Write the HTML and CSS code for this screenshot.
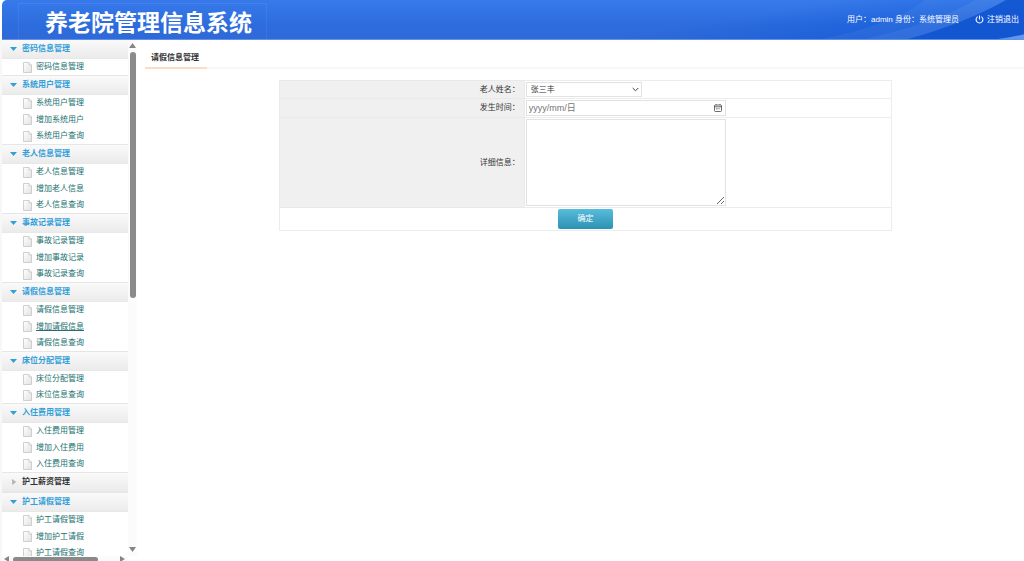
FILE: index.html
```html
<!DOCTYPE html>
<html lang="zh-CN">
<head>
<meta charset="utf-8">
<title>养老院管理信息系统</title>
<link rel="stylesheet" href="styles.css">
</head>
<body>
<svg class="sprites" aria-hidden="true">
  <defs>
    <linearGradient id="paper" x1="0" y1="0" x2="1" y2="1"><stop offset="0" stop-color="#fff"/><stop offset="1" stop-color="#e2e2e2"/></linearGradient>
    <symbol id="page" viewBox="0 0 9 11"><path d="M.5.5h5.500l2.500 2.500v7.500h-8z" fill="url(#paper)" stroke="#c4c4c4" stroke-width=".8"/><path d="M6 .5v2.500h2.500" fill="#fff" stroke="#bcbcbc" stroke-width=".7"/></symbol>
  </defs>
</svg>
<header class="topbar">
  <svg class="swoosh" viewBox="0 0 324 40" preserveAspectRatio="none" aria-hidden="true">
    <path d="M120 40Q190 27 225 0H324V40z" fill="#fff" opacity=".05"/>
    <path d="M165 40Q235 24 275 0H324V40z" fill="#fff" opacity=".06"/>
    <path d="M208 40Q265 24 306 0H324V40z" fill="#0b50d0" opacity=".8"/>
    <path d="M298 40Q312 38 324 35V40z" fill="#79a5f2" opacity=".8"/>
  </svg>
  <div class="brand"><h1 class="brand-name">养老院管理信息系统</h1></div>
  <div class="account">
    <span>用户：admin 身份：系统管理员</span>
    <a class="logout" href="#"><svg class="power" viewBox="0 0 10 10" aria-hidden="true"><path d="M3 1.800A3.800 3.800 0 1 0 7 1.800M5 .5v4.500" fill="none" stroke="#fff" stroke-width="1.200"/></svg>注销退出</a>
  </div>
</header>
<div class="workspace">
  <aside class="sidebar">
    <nav class="menu">
      <section><h2 class="group open">密码信息管理</h2><ul class="items">
        <li><svg class="page"><use href="#page"/></svg><a href="#">密码信息管理</a></li></ul></section>
      <section><h2 class="group open">系统用户管理</h2><ul class="items">
        <li><svg class="page"><use href="#page"/></svg><a href="#">系统用户管理</a></li>
        <li><svg class="page"><use href="#page"/></svg><a href="#">增加系统用户</a></li>
        <li><svg class="page"><use href="#page"/></svg><a href="#">系统用户查询</a></li></ul></section>
      <section><h2 class="group open">老人信息管理</h2><ul class="items">
        <li><svg class="page"><use href="#page"/></svg><a href="#">老人信息管理</a></li>
        <li><svg class="page"><use href="#page"/></svg><a href="#">增加老人信息</a></li>
        <li><svg class="page"><use href="#page"/></svg><a href="#">老人信息查询</a></li></ul></section>
      <section><h2 class="group open">事故记录管理</h2><ul class="items">
        <li><svg class="page"><use href="#page"/></svg><a href="#">事故记录管理</a></li>
        <li><svg class="page"><use href="#page"/></svg><a href="#">增加事故记录</a></li>
        <li><svg class="page"><use href="#page"/></svg><a href="#">事故记录查询</a></li></ul></section>
      <section><h2 class="group open">请假信息管理</h2><ul class="items">
        <li><svg class="page"><use href="#page"/></svg><a href="#">请假信息管理</a></li>
        <li><svg class="page"><use href="#page"/></svg><a class="current" href="#">增加请假信息</a></li>
        <li><svg class="page"><use href="#page"/></svg><a href="#">请假信息查询</a></li></ul></section>
      <section><h2 class="group open">床位分配管理</h2><ul class="items">
        <li><svg class="page"><use href="#page"/></svg><a href="#">床位分配管理</a></li>
        <li><svg class="page"><use href="#page"/></svg><a href="#">床位信息查询</a></li></ul></section>
      <section><h2 class="group open">入住费用管理</h2><ul class="items">
        <li><svg class="page"><use href="#page"/></svg><a href="#">入住费用管理</a></li>
        <li><svg class="page"><use href="#page"/></svg><a href="#">增加入住费用</a></li>
        <li><svg class="page"><use href="#page"/></svg><a href="#">入住费用查询</a></li></ul></section>
      <section><h2 class="group">护工薪资管理</h2></section>
      <section><h2 class="group open">护工请假管理</h2><ul class="items">
        <li><svg class="page"><use href="#page"/></svg><a href="#">护工请假管理</a></li>
        <li><svg class="page"><use href="#page"/></svg><a href="#">增加护工请假</a></li>
        <li><svg class="page"><use href="#page"/></svg><a href="#">护工请假查询</a></li></ul></section>
    </nav>
    <div class="scroll-y" aria-hidden="true">
      <svg class="arrow-y" viewBox="0 0 7 5"><path d="M3.500 0L7 5H0z"/></svg>
      <div class="track-y"><div class="thumb-y"></div></div>
      <svg class="arrow-y" viewBox="0 0 7 5"><path d="M0 0H7L3.500 5z"/></svg>
    </div>
    <div class="scroll-x" aria-hidden="true">
      <svg class="arrow-x" viewBox="0 0 5 6"><path d="M5 0V6L0 3z"/></svg>
      <div class="track-x"><div class="thumb-x"></div></div>
      <svg class="arrow-x" viewBox="0 0 5 6"><path d="M0 0V6L5 3z"/></svg>
    </div>
  </aside>
  <main class="content">
    <div class="tabs"><h2 class="tab">请假信息管理</h2></div>
    <form class="form-area">
      <table class="form-table">
        <tr><th><label for="elder">老人姓名：</label></th><td><select id="elder" class="field elder"><option>张三丰</option></select></td></tr>
        <tr><th><label for="date">发生时间：</label></th><td>
          <div class="field date-box"><input id="date" class="date" type="text" placeholder="yyyy/mm/日"><button class="picker" type="button" aria-label="选择日期"><svg class="calendar" viewBox="0 0 8 8" aria-hidden="true"><rect x=".5" y="1" width="7" height="6.500" rx="1" fill="none" stroke="#444" stroke-width=".8"/><path d="M.5 2.800h7M2 .2v1M6 .2v1" stroke="#444" stroke-width=".8"/><path d="M2.200 4.800h1.500M4.600 4.800h1" stroke="#444" stroke-width=".9"/></svg></button></div></td></tr>
        <tr><th><label for="detail">详细信息：</label></th><td><textarea id="detail" class="field detail"></textarea></td></tr>
        <tr><td class="actions" colspan="2"><button class="submit" type="button">确定</button></td></tr>
      </table>
    </form>
  </main>
</div>
</body>
</html>
```
FILE: styles.css
```css
* { box-sizing: border-box; }
html, body { height: 100%; }
body {
  margin: 0;
  display: flex;
  flex-direction: column;
  overflow: hidden;
  background: #fff;
  color: #333;
  font: 8px/16px "Liberation Sans", "Noto Sans CJK SC", sans-serif;
}
h1, h2, ul { margin: 0; padding: 0; }
ul { list-style: none; }
a { color: inherit; text-decoration: none; }
button, input, select, textarea { font: inherit; color: inherit; }
.sprites { position: absolute; width: 0; height: 0; }

.topbar {
  position: relative;
  flex: none;
  display: flex;
  justify-content: space-between;
  height: 40px;
  margin-left: 2px;
  padding: 0 5px 0 16px;
  border-bottom: 1px solid #5f92ea;
  border-top-left-radius: 5px;
  overflow: hidden;
  background:
    linear-gradient(170deg, transparent 40%, rgba(0, 80, 215, .5) 85%) right / 45% 100% no-repeat,
    linear-gradient(#387aeb, #2c6cdd 65%, #3069d8);
  color: #fff;
}
.swoosh { position: absolute; right: 0; top: 0; width: 324px; height: 100%; }
.brand {
  width: 249px;
  margin-top: 3px;
  padding-left: 26px;
  border: 1px solid rgba(255, 255, 255, .07);
  border-bottom: 0;
}
.brand-name { font-size: 23px; line-height: 39px; font-weight: 700; white-space: nowrap; }
.account { position: relative; display: flex; gap: 16px; line-height: 39px; }
.logout { display: flex; align-items: center; gap: 3px; }
.power { width: 9px; height: 9px; }

.workspace { flex: 1; min-height: 0; display: flex; }
.sidebar {
  flex: none;
  width: 137px;
  padding-left: 2px;
  display: grid;
  grid-template-columns: 1fr 9px;
  grid-template-rows: minmax(0, 1fr) 5px;
  background: linear-gradient(90deg, #f7f7f7 2px, #fff 2px);
}
.menu { overflow: hidden; }
.group {
  display: flex;
  align-items: center;
  height: 20px;
  padding-left: 8px;
  gap: 5px;
  border-top: 1px solid #e6e6e6;
  border-bottom: 1px solid #e8e8e8;
  background: linear-gradient(#fafafa, #ebebeb);
  font-size: 8px;
  font-weight: 700;
}
.menu section:first-child .group { height: 19px; border-top: 0; }
.group::before {
  content: "";
  width: 7px;
  height: 6px;
  background: #b4b4b4;
  clip-path: polygon(30% 0, 90% 50%, 30% 100%);
}
.group.open { color: #339fd9; }
.group.open::before { background: #339fd9; clip-path: polygon(0 17%, 100% 17%, 50% 84%); }
.items li {
  display: flex;
  align-items: center;
  gap: 4px;
  height: 16px;
  padding-left: 21px;
  color: #21706f;
}
.items li:nth-child(2) { height: 17px; }
.items li:nth-child(2):last-child { height: 16px; }
.page { width: 9px; height: 11px; }
.current { text-decoration: underline; }

.scroll-y {
  display: flex;
  flex-direction: column;
  align-items: center;
  padding: 3px 0 4px;
  gap: 4px;
  background: #fbfbfb;
}
.scroll-y, .scroll-x { fill: #858585; }
.arrow-y { flex: none; width: 7px; height: 5px; }
.track-y { flex: 1; width: 6px; }
.thumb-y { height: 50%; border-radius: 3px; background: #8a8a8a; }
.scroll-x {
  display: flex;
  align-items: center;
  padding: 0 3px 0 2px;
  gap: 4px;
  background: #fbfbfb;
}
.arrow-x { flex: none; width: 5px; height: 6px; }
.track-x { flex: 1; height: 4px; }
.thumb-x { width: 83%; height: 5px; border-radius: 3px; background: #8a8a8a; }

.content { flex: 1; min-width: 0; padding: 10px 0 0 8px; }
.tabs { display: flex; border-bottom: 2px solid #f7f7f7; }
.tab {
  margin-bottom: -2px;
  padding: 0 8px 1px 6px;
  border-bottom: 2px solid #fddcc4;
  font-size: 8px;
  font-weight: 700;
}
.form-area { padding: 11px 0 0 2px; }
.form-table {
  width: 70%;
  margin: 0 auto;
  border-collapse: collapse;
}
.form-table th, .form-table td { border: 1px solid #ececec; padding: 1px; height: 18px; }
.form-table th {
  width: 40%;
  padding-right: 4px;
  background: #f0f0f0;
  border-color: #e9e9e9;
  font-weight: 400;
  line-height: 14px;
  text-align: right;
}
.field { display: block; border: 1px solid #e2e2e2; border-radius: 0; background-color: #fff; }
.elder {
  width: 116px;
  height: 15px;
  padding: 0 4px;
  line-height: 13px;
  appearance: none;
  background: #fff url("data:image/svg+xml,%3Csvg xmlns='http://www.w3.org/2000/svg' width='7' height='5'%3E%3Cpath d='M.7 1l2.800 2.800L6.300 1' fill='none' stroke='%23444' stroke-width='1'/%3E%3C/svg%3E") no-repeat right 2px center;
}
.date-box { display: flex; align-items: center; width: 200px; height: 16px; padding: 0 3px 0 2px; }
.date { flex: 1; min-width: 0; height: 14px; padding: 0; border: 0; outline: 0; background: none; font-size: 9px; }
.date::placeholder { color: #757575; opacity: 1; }
.picker { display: flex; padding: 0; border: 0; background: none; }
.calendar { width: 8px; height: 8px; }
.detail { width: 200px; height: 87px; resize: both; }
.form-table .actions { text-align: center; }
.submit {
  width: 55px;
  height: 20px;
  padding: 0;
  vertical-align: top;
  border: 0;
  border-radius: 2px;
  background: linear-gradient(#58bcdb, #2c92b3);
  color: #fff;
}
```
